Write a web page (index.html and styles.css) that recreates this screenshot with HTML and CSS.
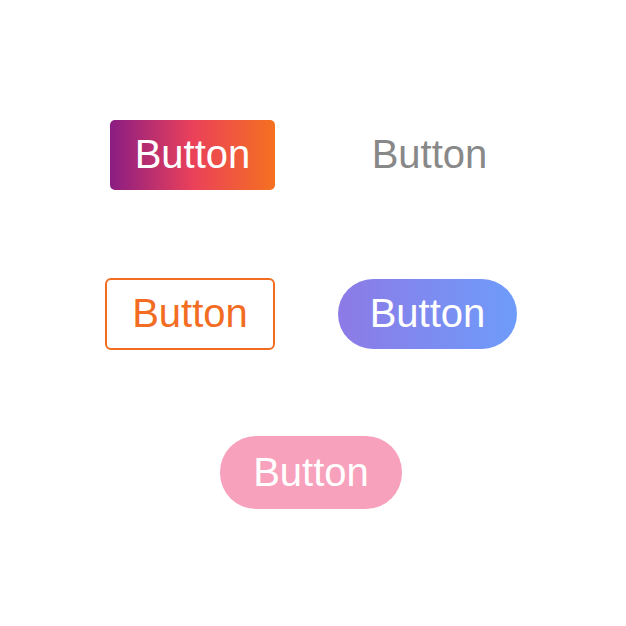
FILE: index.html
```html
<!DOCTYPE html>
<html lang="en">
<head>
    <meta charset="UTF-8">
    <meta name="viewport" content="width=device-width, initial-scale=1.0">
    <title>Buttons</title>
    <link rel="stylesheet" href="styles.css">
</head>
<body>
    <div class="grid">
        <div class="cell"><button class="btn btn-sunset">Button</button></div>
        <div class="cell"><button class="btn btn-text">Button</button></div>
        <div class="cell"><button class="btn btn-outline">Button</button></div>
        <div class="cell"><button class="btn btn-pill btn-sky">Button</button></div>
        <div class="cell cell-wide"><button class="btn btn-pill btn-pink">Button</button></div>
    </div>
</body>
</html>
```

FILE: styles.css
```css
body, html {
    margin: 0;
    padding: 0;
    height: 100%;
    background: #fff;
    font-family: 'Liberation Sans', Arial, sans-serif;
}

body {
    display: flex;
    justify-content: center;
    align-items: center;
}

.grid {
    display: grid;
    grid-template-columns: 239px 239px;
    grid-auto-rows: 159px;
    margin-top: 1px;
}

.cell {
    display: flex;
    justify-content: center;
    align-items: center;
}

.cell-wide {
    grid-column: 1 / 3;
    padding-right: 4px;
}

.btn {
    font-family: inherit;
    font-size: 40px;
    border: none;
    background: none;
    padding: 0;
    cursor: pointer;
    height: 70px;
    box-sizing: border-box;
}

.btn-sunset {
    width: 165px;
    border-radius: 5px;
    color: #fff;
    background: linear-gradient(to right, #8a1d83, #ea405a 50%, #f57120);
    margin-left: -2px;
}

.btn-text {
    width: 165px;
    color: #888;
    margin-left: -6px;
}

.btn-outline {
    width: 170px;
    height: 72px;
    border: 2px solid #f26c22;
    border-radius: 6px;
    color: #f26c22;
    background: #fff;
    margin-left: -7px;
}

.btn-pill {
    color: #fff;
    border-radius: 36px;
}

.btn-sky {
    width: 179px;
    background: linear-gradient(to right, #8d7ae6, #6e9cfa);
    margin-left: -10px;
}

.btn-pink {
    width: 182px;
    height: 73px;
    background: #f8a1bd;
}
```
